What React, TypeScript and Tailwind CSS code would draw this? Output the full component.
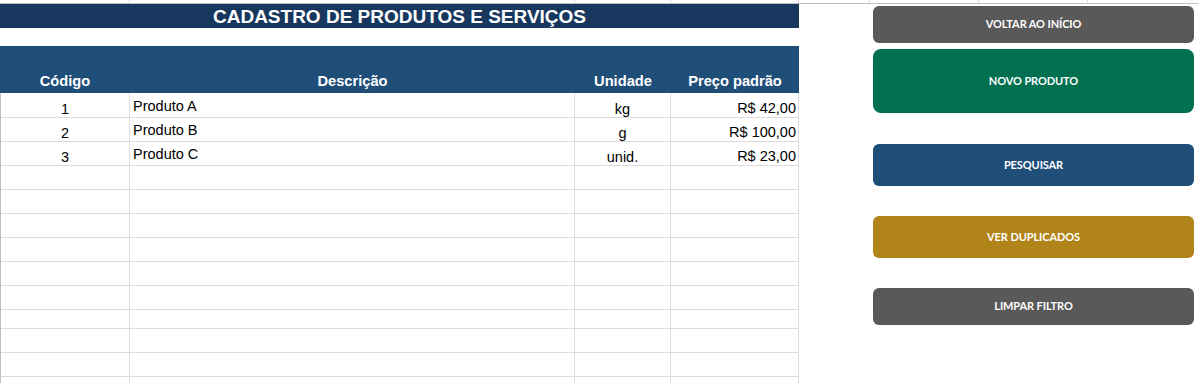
import React from "react";

type Produto = {
  codigo: number;
  descricao: string;
  unidade: string;
  preco: string;
};

const produtos: Produto[] = [
  { codigo: 1, descricao: "Produto A", unidade: "kg", preco: "R$ 42,00" },
  { codigo: 2, descricao: "Produto B", unidade: "g", preco: "R$ 100,00" },
  { codigo: 3, descricao: "Produto C", unidade: "unid.", preco: "R$ 23,00" },
];

// row heights follow the sheet (one row is shorter)
const rowHeights = [25, 24, 24, 24, 24, 24, 24, 24, 24, 19, 24, 24, 24];

const buttons = [
  { label: "VOLTAR AO INÍCIO", cls: "h-[37px] bg-[#595959]", mt: "mt-[2px]" },
  { label: "NOVO PRODUTO", cls: "h-[64px] bg-[#007050] rounded-[8px]", mt: "mt-[6px]" },
  { label: "PESQUISAR", cls: "h-[42px] bg-[#1f4e79]", mt: "mt-[31px]" },
  { label: "VER DUPLICADOS", cls: "h-[42px] bg-[#b18419]", mt: "mt-[30px]" },
  { label: "LIMPAR FILTRO", cls: "h-[37px] bg-[#595959]", mt: "mt-[30px]" },
];

export default function App() {
  return (
    <div className="w-[1198px] h-[383px] overflow-hidden bg-white font-['Liberation_Sans',Arial,sans-serif] text-black">
      {/* thin strip of the row above */}
      <div className="flex h-[4px] border-b border-[#bfbfbf]">
        <div className="w-[130px] border-r border-[#d9d9d9]" />
        <div className="w-[445px] border-r border-[#d9d9d9]" />
        <div className="w-[96px] border-r border-[#d9d9d9]" />
        <div className="w-[128px] border-r border-[#d9d9d9]" />
        <div className="w-[71px] border-r border-[#d9d9d9]" />
        <div className="w-[109px] border-r border-[#d9d9d9]" />
        <div className="w-[109px] border-r border-[#d9d9d9]" />
        <div className="flex-1" />
      </div>

      <div className="flex">
        <div className="w-[799px] flex-none">
          <div className="h-[24px] bg-[#17375e] flex items-center justify-center text-white font-bold text-[19px] leading-none">
            CADASTRO DE PRODUTOS E SERVIÇOS
          </div>
          <div className="h-[18px]" />
          <div className="h-[47px] bg-[#1f4e79] flex items-end pb-[4px] text-white font-bold text-[14.67px] leading-none">
            <div className="w-[130px] text-center">Código</div>
            <div className="w-[445px] text-center">Descrição</div>
            <div className="w-[96px] text-center">Unidade</div>
            <div className="w-[128px] text-center">Preço padrão</div>
          </div>

          <div className="border-l border-[#bfbfbf] text-[14.5px] leading-none">
            {rowHeights.map((h, i) => {
              const p = produtos[i];
              return (
                <div
                  key={i}
                  className="flex border-b border-[#dcdcdc] box-border"
                  style={{ height: h }}
                >
                  <div className="w-[129px] border-r border-[#dcdcdc] flex items-end justify-center pb-[1px]">
                    {p?.codigo}
                  </div>
                  <div className="w-[445px] border-r border-[#dcdcdc] flex items-end pl-[3px] pb-[4px]">
                    {p?.descricao}
                  </div>
                  <div className="w-[96px] border-r border-[#dcdcdc] flex items-end justify-center pb-[1px]">
                    {p?.unidade}
                  </div>
                  <div className="w-[128px] border-r border-[#dcdcdc] flex items-end justify-end pr-[2px] pb-[2px]">
                    {p?.preco}
                  </div>
                </div>
              );
            })}
          </div>
        </div>

        <div className="flex-1 pl-[74px] pr-[4px] flex flex-col">
          {buttons.map((b) => (
            <button
              key={b.label}
              className={`${b.mt} ${b.cls} w-[321px] rounded-[6px] flex items-center justify-center text-white font-['Lato',sans-serif] font-bold text-[11px] tracking-[-0.1px]`}
            >
              {b.label}
            </button>
          ))}
        </div>
      </div>
    </div>
  );
}
